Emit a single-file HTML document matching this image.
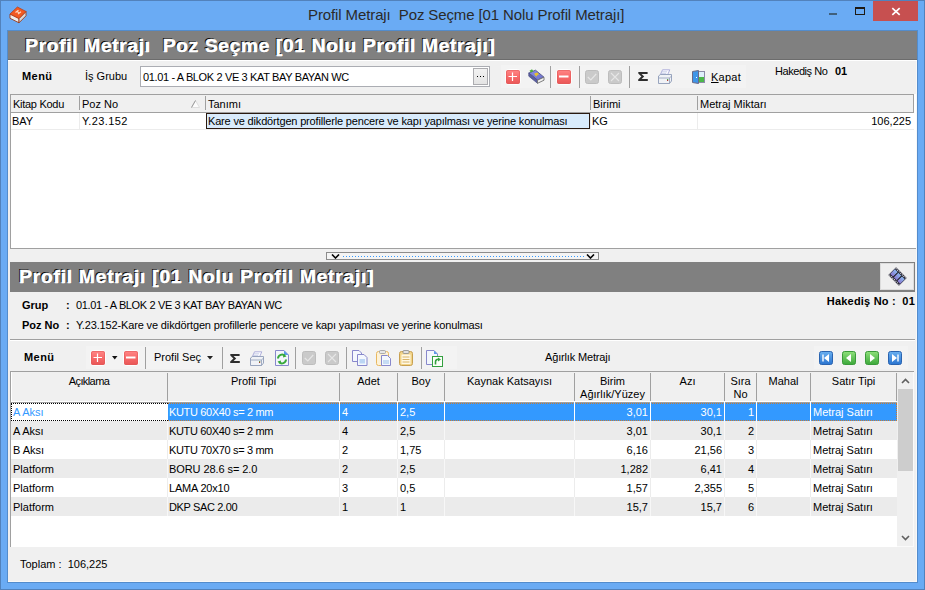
<!DOCTYPE html>
<html><head><meta charset="utf-8">
<style>
*{margin:0;padding:0;box-sizing:border-box}
html,body{width:925px;height:590px;overflow:hidden;background:#6aabf4;font-family:"Liberation Sans",sans-serif;font-size:11px;color:#000}
.a{position:absolute}
.t{position:absolute;white-space:nowrap;line-height:13px;font-size:11px}
.b{font-weight:bold}
.r{text-align:right}
.c{text-align:center}
.sep{position:absolute;width:1px;background:#a0a0a0}
.vl{position:absolute;width:1px}
.hl{position:absolute;height:1px}
</style></head><body>
<!-- window frame -->
<div class="a" style="left:0;top:0;width:925px;height:590px;border:1px solid #5282bc;background:#6aabf4"></div>
<div class="a" style="left:7px;top:30px;width:911px;height:553px;border:1px solid #538ccc"></div>
<!-- title icon -->
<svg class="a" style="left:9px;top:6px" width="18" height="18" viewBox="0 0 18 18"><path d="M1 8 L10 12.5 L10 16.8 L1 12.3 Z" fill="#eeeeee" stroke="#9a3a1a" stroke-width="0.9"/><path d="M10 12.5 L17 5.5 L17 9.8 L10 16.8 Z" fill="#d8d8d8" stroke="#9a3a1a" stroke-width="0.9"/><path d="M8.4 1 L17 5.5 L10 12.5 L1 8 Z" fill="#f25a22" stroke="#b8401a" stroke-width="0.8"/><path d="M6.5 6.5 L9.5 4.2 M9 8 L12 5.7 M7.8 5.6 L10.6 7" stroke="#ffd8c0" stroke-width="1.1"/></svg>
<div class="t" style="left:308px;top:6px;font-size:15px;line-height:18px;letter-spacing:-0.11px;color:#2a2a2a">Profil Metrajı&nbsp; Poz Seçme [01 Nolu Profil Metrajı]</div>
<!-- caption buttons -->
<div class="a" style="left:829px;top:13px;width:8px;height:2px;background:#40607c"></div>
<div class="a" style="left:855px;top:7px;width:10px;height:8px;border:1px solid #1e1a14;border-top-width:2px"></div>
<div class="a" style="left:873px;top:1px;width:45px;height:20px;background:#c75050"></div>
<svg class="a" style="left:891px;top:7px" width="10" height="9" viewBox="0 0 10 9"><path d="M1.3 1.2 L8.7 7.8 M8.7 1.2 L1.3 7.8" stroke="#fff" stroke-width="1.7"/></svg>

<!-- client area -->
<div class="a" style="left:8px;top:31px;width:909px;height:551px;background:#f0f0f0;border-right:1px solid #f8f8f8;border-bottom:1px solid #f8f8f8"></div>

<!-- header 1 -->
<div class="a" style="left:8px;top:31px;width:909px;height:29px;background:#808080;border-bottom:1px solid #6c6c6c"></div>
<div class="a" style="left:8px;top:60px;width:909px;height:1px;background:#fff"></div>
<div class="t b" style="left:25px;top:35px;font-size:19px;line-height:22px;letter-spacing:0.75px;color:#fff;text-shadow:-1px -1px 0 #000,0.5px 0 0 #fff;-webkit-text-stroke:0.3px #fff">Profil Metrajı&nbsp; Poz Seçme [01 Nolu Profil Metrajı]</div>

<!-- toolbar 1 -->
<div class="t b" style="left:22px;top:70px;letter-spacing:0.45px">Menü</div>
<div class="t" style="left:85px;top:70px">İş Grubu</div>
<div class="a" style="left:140px;top:66px;width:350px;height:21px;background:#fff;border:1px solid #abadb3"></div>
<div class="t" style="left:143px;top:71px;letter-spacing:-0.36px">01.01 - A BLOK 2 VE 3 KAT BAY BAYAN WC</div>
<div class="a" style="left:473px;top:68px;width:15px;height:17px;background:linear-gradient(#f2f2f2,#e4e4e4);border:1px solid #acacb0"></div>
<div class="a" style="left:477px;top:76px;width:9px;height:1px;background:repeating-linear-gradient(90deg,#000 0 1px,transparent 1px 3px)"></div>
<div class="a" style="left:501px;top:65px;width:245px;height:23px;background:#f3f3f3"></div>
<!-- red plus -->
<svg class="a" style="left:505px;top:69px" width="16" height="16" viewBox="0 0 16 16"><defs><linearGradient id="rg" x1="0" y1="0" x2="0" y2="1"><stop offset="0" stop-color="#ff8686"/><stop offset="0.5" stop-color="#f86a6a"/><stop offset="1" stop-color="#e85656"/></linearGradient></defs><rect x="0.5" y="0.5" width="15" height="15" rx="3" fill="none" stroke="#fff" stroke-opacity="0.85"/><rect x="1" y="1" width="14" height="14" rx="2" fill="url(#rg)"/><rect x="1.5" y="1.5" width="13" height="13" rx="1.5" fill="none" stroke="#e25a5a" stroke-opacity="0.6"/><path d="M7.5 3.5 V12 M3.5 7.5 H12" stroke="#fff" stroke-width="1.2"/></svg>
<!-- book -->
<svg class="a" style="left:528px;top:69px" width="17" height="15" viewBox="0 0 17 15"><defs><linearGradient id="bk" x1="0" y1="0" x2="1" y2="1"><stop offset="0" stop-color="#8a8ee8"/><stop offset="1" stop-color="#6c70c8"/></linearGradient></defs><path d="M0.8 4 L7.5 1.2 L16 8.2 L9.5 11.2 Z" fill="url(#bk)" stroke="#50548a" stroke-width="0.9"/><path d="M0.8 4 L9.5 11.2 L9.5 14.3 L0.8 7.2 Z" fill="#5a5ea0" stroke="#50548a" stroke-width="0.8"/><path d="M9.5 11.2 L16 8.2 L16 11.2 L9.5 14.3 Z" fill="#f2f2f2" stroke="#707070" stroke-width="0.9"/><path d="M1.5 1.8 L4 0.3 L5.5 2.2 L3 3.5 Z" fill="#4caf3a"/><path d="M7 5 L9 4.2 L10 5.2 L8 6.2 Z M8 6.2 L8.5 7.2" stroke="#f0c820" stroke-width="1.2" fill="none"/></svg>
<div class="sep" style="left:550px;top:66px;height:22px"></div>
<svg class="a" style="left:556px;top:69px" width="16" height="16" viewBox="0 0 16 16"><rect x="0.5" y="0.5" width="15" height="15" rx="3" fill="none" stroke="#fff" stroke-opacity="0.85"/><rect x="1" y="1" width="14" height="14" rx="2" fill="url(#rg)"/><rect x="1.5" y="1.5" width="13" height="13" rx="1.5" fill="none" stroke="#e25a5a" stroke-opacity="0.6"/><path d="M3 7.5 H12.5" stroke="#fff" stroke-width="2"/></svg>
<div class="sep" style="left:579px;top:66px;height:22px"></div>
<svg class="a" style="left:585px;top:70px" width="14" height="14" viewBox="0 0 14 14"><rect x="0.5" y="0.5" width="13" height="13" rx="2" fill="#cacaca" stroke="#bdbdbd"/><path d="M2.8 7 L5.8 10 L11.2 4" stroke="#e6e6e6" stroke-width="1.2" fill="none"/></svg>
<svg class="a" style="left:608px;top:70px" width="14" height="14" viewBox="0 0 14 14"><rect x="0.5" y="0.5" width="13" height="13" rx="2" fill="#cacaca" stroke="#bdbdbd"/><path d="M3 3 L11 11 M11 3 L3 11" stroke="#e6e6e6" stroke-width="1.1"/></svg>
<div class="sep" style="left:629px;top:66px;height:22px"></div>
<svg class="a" style="left:638px;top:72px" width="10" height="9" viewBox="0 0 10 9"><path d="M0.3 0 H9.6 V2 H3.6 L6.2 4.5 L3.6 7 H9.8 V9 H0.2 V7.6 L3.4 4.5 L0.3 1.4 Z" fill="#2e2e2e"/></svg>
<!-- printer -->
<svg class="a" style="left:657px;top:69px" width="17" height="16" viewBox="0 0 17 16"><path d="M5.5 0.8 H12.8 L10.5 6 H3.2 Z" fill="#fafaff" stroke="#a8a8d8" stroke-width="0.9"/><path d="M4.5 2.8 H10 M3.8 4.4 H9.2" stroke="#b8c0e0" stroke-width="0.7"/><path d="M1.5 7 L3.5 5.5 H14.5 L14.5 12 L12.5 14.5 H1.5 Z" fill="#f0f2f6" stroke="#8e9cb8" stroke-width="0.9"/><path d="M1.5 9 H12.5 L14.5 7 M12.5 9 V14.5" stroke="#8e9cb8" stroke-width="0.8" fill="none"/><rect x="10" y="10.5" width="1.2" height="1.5" fill="#b04030"/><rect x="10" y="10" width="1.2" height="0.8" fill="#40a040"/></svg>
<!-- door -->
<svg class="a" style="left:692px;top:70px" width="13" height="14" viewBox="0 0 13 14"><rect x="6.5" y="1.5" width="6" height="11" fill="#dff0fb" stroke="#8b8ba8" stroke-width="1"/><rect x="7" y="7" width="5" height="5" fill="#4cb84a"/><path d="M0.5 1.5 L6.5 0.5 V13.5 L0.5 12.5 Z" fill="#3f95e8" stroke="#6a6a88" stroke-width="1"/><rect x="4" y="7" width="1" height="1" fill="#fff"/></svg>
<div class="t" style="left:711px;top:71px;letter-spacing:0.25px"><u>K</u>apat</div>
<div class="t" style="left:775px;top:65px;letter-spacing:-0.45px">Hakediş No</div>
<div class="t b" style="left:835px;top:65px">01</div>

<!-- upper grid -->
<div class="a" style="left:10px;top:94px;width:906px;height:155px;background:#fff;border-left:1px solid #a0a0a0;border-bottom:1px solid #a0a0a0"></div>
<div class="a" style="left:10px;top:94px;width:904px;height:19px;background:#f0f0f0;border:1px solid #a0a0a0"></div>
<div class="sep" style="left:79px;top:96px;height:14px"></div>
<div class="sep" style="left:205px;top:96px;height:14px"></div>
<div class="sep" style="left:590px;top:96px;height:14px"></div>
<div class="sep" style="left:697px;top:96px;height:14px"></div>
<svg class="a" style="left:191px;top:100px" width="9" height="8" viewBox="0 0 9 8"><path d="M4.5 0.5 L8.5 7.5 H0.5 Z" fill="#fcfcfc" stroke="#d8d8d8" stroke-width="0.8"/><path d="M4.5 0.5 L0.5 7.5" stroke="#909090" stroke-width="0.9"/></svg>
<div class="t" style="left:13px;top:98px;letter-spacing:-0.28px">Kitap Kodu</div>
<div class="t" style="left:82px;top:98px">Poz No</div>
<div class="t" style="left:208px;top:98px">Tanımı</div>
<div class="t" style="left:593px;top:98px">Birimi</div>
<div class="t" style="left:700px;top:98px">Metraj Miktarı</div>
<div class="hl" style="left:11px;top:129px;width:903px;background:#ececec"></div>
<div class="vl" style="left:79px;top:113px;height:16px;background:#ececec"></div>
<div class="vl" style="left:590px;top:113px;height:16px;background:#ececec"></div>
<div class="vl" style="left:697px;top:113px;height:16px;background:#ececec"></div>
<div class="t" style="left:12px;top:115px">BAY</div>
<div class="t" style="left:82px;top:115px;letter-spacing:0.4px">Y.23.152</div>
<div class="a" style="left:206px;top:113px;width:384px;height:16px;background:#d9ebfb;border:1px solid #2a1a10"></div>
<div class="t" style="left:208px;top:115px;letter-spacing:-0.17px">Kare ve dikdörtgen profillerle pencere ve kapı yapılması ve yerine konulması</div>
<div class="t" style="left:592px;top:115px">KG</div>
<div class="t r" style="left:800px;width:111px;top:115px">106,225</div>

<!-- splitter -->
<div class="a" style="left:326px;top:252px;width:273px;height:8px;background:#f4f4f4;border:1px solid #8c8c8c"></div>
<svg class="a" style="left:331px;top:254px" width="9" height="5" viewBox="0 0 9 5"><path d="M1 0.5 L4.5 4 L8 0.5" stroke="#000" stroke-width="1.6" fill="none"/></svg>
<svg class="a" style="left:586px;top:254px" width="9" height="5" viewBox="0 0 9 5"><path d="M1 0.5 L4.5 4 L8 0.5" stroke="#000" stroke-width="1.6" fill="none"/></svg>
<div class="a" style="left:343px;top:256px;width:241px;height:1px;background:repeating-linear-gradient(90deg,#3399ff 0 1px,transparent 1px 3px)"></div>

<!-- header 2 -->
<div class="a" style="left:10px;top:262px;width:905px;height:30px;background:#808080"></div>
<div class="t b" style="left:19px;top:266px;font-size:19px;line-height:22px;letter-spacing:0.85px;color:#fff;text-shadow:-1px -1px 0 #000,0.5px 0 0 #fff;-webkit-text-stroke:0.3px #fff">Profil Metrajı [01 Nolu Profil Metrajı]</div>
<div class="a" style="left:880px;top:263px;width:34px;height:27px;background:#efefef;border:1px solid #dcdcdc"></div>
<svg class="a" style="left:887px;top:266px" width="21" height="21" viewBox="0 0 21 21"><defs><linearGradient id="fm" x1="0" y1="0" x2="0" y2="1"><stop offset="0" stop-color="#8ab8f0"/><stop offset="1" stop-color="#8a78d0"/></linearGradient></defs><g transform="rotate(45 10.5 10.5)"><rect x="3" y="5" width="15" height="11" fill="#2a2a3a"/><rect x="3.5" y="7.3" width="14" height="6.4" fill="url(#fm)"/><path d="M8 7 V14 M13 7 V14" stroke="#111" stroke-width="1"/><path d="M3.5 6 H17.5 M3.5 15 H17.5" stroke="#fff" stroke-width="1" stroke-dasharray="1 1.2"/></g></svg>

<!-- info -->
<div class="t b" style="left:22px;top:299px">Grup</div>
<div class="t b" style="left:66px;top:299px">:</div>
<div class="t" style="left:76px;top:299px;letter-spacing:-0.36px">01.01 - A BLOK 2 VE 3 KAT BAY BAYAN WC</div>
<div class="t b" style="left:22px;top:319px">Poz No</div>
<div class="t b" style="left:66px;top:319px">:</div>
<div class="t" style="left:76px;top:319px;letter-spacing:-0.14px">Y.23.152-Kare ve dikdörtgen profillerle pencere ve kapı yapılması ve yerine konulması</div>
<div class="t b r" style="left:760px;width:155px;top:295px;letter-spacing:0.2px">Hakediş No :&nbsp; 01</div>
<div class="hl" style="left:10px;top:339px;width:905px;background:#a0a0a0"></div>
<div class="hl" style="left:10px;top:340px;width:905px;background:#fff"></div>
<!-- toolbar 2 -->
<div class="a" style="left:86px;top:346px;width:371px;height:23px;background:#f3f3f3"></div>
<div class="a" style="left:814px;top:346px;width:94px;height:23px;background:#f3f3f3"></div>
<div class="t b" style="left:24px;top:351px;letter-spacing:0.45px">Menü</div>
<svg class="a" style="left:90px;top:350px" width="16" height="16" viewBox="0 0 16 16"><rect x="0.5" y="0.5" width="15" height="15" rx="3" fill="none" stroke="#fff" stroke-opacity="0.85"/><rect x="1" y="1" width="14" height="14" rx="2" fill="url(#rg)"/><rect x="1.5" y="1.5" width="13" height="13" rx="1.5" fill="none" stroke="#e25a5a" stroke-opacity="0.6"/><path d="M7.5 3.5 V12 M3.5 7.5 H12" stroke="#fff" stroke-width="1.2"/></svg>
<svg class="a" style="left:112px;top:356px" width="6" height="4" viewBox="0 0 6 4"><path d="M0 0 H5.5 L2.75 3.5 Z" fill="#111"/></svg>
<svg class="a" style="left:123px;top:350px" width="16" height="16" viewBox="0 0 16 16"><rect x="0.5" y="0.5" width="15" height="15" rx="3" fill="none" stroke="#fff" stroke-opacity="0.85"/><rect x="1" y="1" width="14" height="14" rx="2" fill="url(#rg)"/><rect x="1.5" y="1.5" width="13" height="13" rx="1.5" fill="none" stroke="#e25a5a" stroke-opacity="0.6"/><path d="M3 7.5 H12.5" stroke="#fff" stroke-width="2"/></svg>
<div class="sep" style="left:145px;top:347px;height:22px"></div>
<div class="t" style="left:154px;top:351px">Profil Seç</div>
<svg class="a" style="left:207px;top:356px" width="6" height="4" viewBox="0 0 6 4"><path d="M0 0 H6 L3 3.5 Z" fill="#222"/></svg>
<div class="sep" style="left:222px;top:347px;height:22px"></div>
<svg class="a" style="left:230px;top:354px" width="10" height="9" viewBox="0 0 10 9"><path d="M0.3 0 H9.6 V2 H3.6 L6.2 4.5 L3.6 7 H9.8 V9 H0.2 V7.6 L3.4 4.5 L0.3 1.4 Z" fill="#2e2e2e"/></svg>
<svg class="a" style="left:249px;top:351px" width="17" height="16" viewBox="0 0 17 16"><path d="M5.5 0.8 H12.8 L10.5 6 H3.2 Z" fill="#fafaff" stroke="#a8a8d8" stroke-width="0.9"/><path d="M4.5 2.8 H10 M3.8 4.4 H9.2" stroke="#b8c0e0" stroke-width="0.7"/><path d="M1.5 7 L3.5 5.5 H14.5 L14.5 12 L12.5 14.5 H1.5 Z" fill="#f0f2f6" stroke="#8e9cb8" stroke-width="0.9"/><path d="M1.5 9 H12.5 L14.5 7 M12.5 9 V14.5" stroke="#8e9cb8" stroke-width="0.8" fill="none"/><rect x="10" y="10.5" width="1.2" height="1.5" fill="#b04030"/><rect x="10" y="10" width="1.2" height="0.8" fill="#40a040"/></svg>
<svg class="a" style="left:275px;top:350px" width="14" height="16" viewBox="0 0 14 16"><path d="M0.5 0.5 H9 L13.5 5 V15.5 H0.5 Z" fill="#f2f6fc" stroke="#8888cc" stroke-width="1"/><path d="M9 0.5 V5 H13.5 Z" fill="#5a9ae8"/><path d="M3 8.5 A4 4 0 0 1 10 6" stroke="#36a83a" stroke-width="2" fill="none"/><path d="M8.5 4 L11.5 6.5 L8 7.5 Z" fill="#36a83a"/><path d="M11 9.5 A4 4 0 0 1 4 12" stroke="#36a83a" stroke-width="2" fill="none"/><path d="M5.5 14 L2.5 11.5 L6 10.5 Z" fill="#36a83a"/></svg>
<div class="sep" style="left:295px;top:347px;height:22px"></div>
<svg class="a" style="left:302px;top:351px" width="14" height="14" viewBox="0 0 14 14"><rect x="0.5" y="0.5" width="13" height="13" rx="2" fill="#cacaca" stroke="#bdbdbd"/><path d="M2.8 7 L5.8 10 L11.2 4" stroke="#e6e6e6" stroke-width="1.2" fill="none"/></svg>
<svg class="a" style="left:325px;top:351px" width="14" height="14" viewBox="0 0 14 14"><rect x="0.5" y="0.5" width="13" height="13" rx="2" fill="#cacaca" stroke="#bdbdbd"/><path d="M3 3 L11 11 M11 3 L3 11" stroke="#e6e6e6" stroke-width="1.1"/></svg>
<div class="sep" style="left:346px;top:347px;height:22px"></div>
<svg class="a" style="left:352px;top:350px" width="16" height="16" viewBox="0 0 16 16"><path d="M0.5 0.5 H7 L9.5 3 V11.5 H0.5 Z" fill="#f4f8fe" stroke="#8888cc" stroke-width="1"/><path d="M5.5 4.5 H12 L15 7.5 V15.5 H5.5 Z" fill="#f4f8fe" stroke="#8888cc" stroke-width="1"/><path d="M7.5 9 H13 V13.5 H7.5 Z" fill="#bcd6f4"/></svg>
<svg class="a" style="left:376px;top:350px" width="15" height="16" viewBox="0 0 15 16"><rect x="0.5" y="1.5" width="12" height="14" rx="2" fill="#fdf2d8" stroke="#e8b860" stroke-width="1"/><rect x="3.5" y="0.5" width="6" height="3" rx="1" fill="#e6e6e6" stroke="#9a9a9a" stroke-width="0.8"/><path d="M5.5 5.5 H11.5 L14.5 8.5 V15.5 H5.5 Z" fill="#f4f8fe" stroke="#8888cc" stroke-width="1"/><path d="M7 10 H13 V14 H7 Z" fill="#c6dcf4"/></svg>
<svg class="a" style="left:399px;top:350px" width="14" height="16" viewBox="0 0 14 16"><rect x="0.5" y="1.5" width="13" height="14" rx="2" fill="#f2d488" stroke="#c8a050" stroke-width="1"/><rect x="4" y="0.5" width="6" height="3" rx="1" fill="#e0e0e0" stroke="#8a8a8a" stroke-width="0.8"/><rect x="2.5" y="4.5" width="9" height="9.5" fill="#fff8e4"/><path d="M3.5 7 H10.5 M3.5 9.5 H10.5 M3.5 12 H10.5" stroke="#d8b468" stroke-width="1"/></svg>
<div class="sep" style="left:421px;top:347px;height:22px"></div>
<svg class="a" style="left:426px;top:350px" width="17" height="17" viewBox="0 0 17 17"><path d="M0.5 0.5 H8 L11.5 4 V14.5 H0.5 Z" fill="#f2f6fc" stroke="#8888cc" stroke-width="1"/><path d="M8 0.5 V4 H11.5 Z" fill="#5a9ae8"/><rect x="6.5" y="6.5" width="10" height="10" fill="#fafff8" stroke="#34a040" stroke-width="1"/><path d="M9.5 14.5 V12 A2.5 2.5 0 0 1 13 9.5" stroke="#34a040" stroke-width="1.6" fill="none"/><path d="M12 7.5 L15 9.5 L12 11.5 Z" fill="#34a040"/></svg>
<div class="t" style="left:545px;top:351px;letter-spacing:-0.16px">Ağırlık Metrajı</div>
<!-- nav -->
<svg class="a" style="left:819px;top:351px" width="14" height="14" viewBox="0 0 14 14"><defs><linearGradient id="bg1" x1="0" y1="0" x2="0" y2="1"><stop offset="0" stop-color="#6ab0f0"/><stop offset="1" stop-color="#2a74d0"/></linearGradient><linearGradient id="gg1" x1="0" y1="0" x2="0" y2="1"><stop offset="0" stop-color="#8ee07a"/><stop offset="1" stop-color="#3ca83a"/></linearGradient></defs><rect x="0.5" y="0.5" width="13" height="13" rx="2" fill="url(#bg1)" stroke="#2a64b0"/><path d="M4 3.5 V10.5" stroke="#fff" stroke-width="1.4"/><path d="M10 3 V11 L5 7 Z" fill="#fff"/></svg>
<svg class="a" style="left:842px;top:351px" width="14" height="14" viewBox="0 0 14 14"><rect x="0.5" y="0.5" width="13" height="13" rx="2" fill="url(#gg1)" stroke="#3a9a3a"/><path d="M9 3 V11 L4 7 Z" fill="#fff"/></svg>
<svg class="a" style="left:865px;top:351px" width="14" height="14" viewBox="0 0 14 14"><rect x="0.5" y="0.5" width="13" height="13" rx="2" fill="url(#gg1)" stroke="#3a9a3a"/><path d="M5 3 V11 L10 7 Z" fill="#fff"/></svg>
<svg class="a" style="left:888px;top:351px" width="14" height="14" viewBox="0 0 14 14"><rect x="0.5" y="0.5" width="13" height="13" rx="2" fill="url(#bg1)" stroke="#2a64b0"/><path d="M10 3.5 V10.5" stroke="#fff" stroke-width="1.4"/><path d="M4 3 V11 L9 7 Z" fill="#fff"/></svg>

<!-- lower grid -->
<div class="a" style="left:10px;top:371px;width:904px;height:176px;background:#fff;border-left:1px solid #a0a0a0;border-top:1px solid #a0a0a0"></div>
<div class="a" style="left:11px;top:372px;width:886px;height:31px;background:#f0f0f0;border-bottom:1px solid #a0a0a0;box-shadow:inset 1px -1px 0 #fff"></div>
<div class="sep" style="left:167px;top:373px;height:28px"></div>
<div class="sep" style="left:339px;top:373px;height:28px"></div>
<div class="sep" style="left:397px;top:373px;height:28px"></div>
<div class="sep" style="left:444px;top:373px;height:28px"></div>
<div class="sep" style="left:574px;top:373px;height:28px"></div>
<div class="sep" style="left:650px;top:373px;height:28px"></div>
<div class="sep" style="left:724px;top:373px;height:28px"></div>
<div class="sep" style="left:756px;top:373px;height:28px"></div>
<div class="sep" style="left:810px;top:373px;height:28px"></div>
<div class="sep" style="left:896px;top:373px;height:28px"></div>
<div class="t c" style="left:11px;width:156px;top:375px;letter-spacing:-0.6px">Açıklama</div>
<div class="t c" style="left:168px;width:171px;top:375px">Profil Tipi</div>
<div class="t c" style="left:340px;width:57px;top:375px">Adet</div>
<div class="t c" style="left:398px;width:46px;top:375px">Boy</div>
<div class="t c" style="left:445px;width:129px;top:375px">Kaynak Katsayısı</div>
<div class="t c" style="left:575px;width:75px;top:375px">Birim</div>
<div class="t c" style="left:575px;width:75px;top:388px">Ağırlık/Yüzey</div>
<div class="t c" style="left:651px;width:73px;top:375px">Azı</div>
<div class="t c" style="left:725px;width:31px;top:375px">Sıra</div>
<div class="t c" style="left:725px;width:31px;top:388px">No</div>
<div class="t c" style="left:757px;width:53px;top:375px">Mahal</div>
<div class="t c" style="left:811px;width:85px;top:375px">Satır Tipi</div>
<!-- scrollbar -->
<div class="a" style="left:897px;top:372px;width:17px;height:175px;background:#f0f0f0;border-right:1px solid #fafafa;border-bottom:1px solid #fafafa"></div>
<div class="a" style="left:898px;top:389px;width:15px;height:82px;background:#cdcdcd"></div>
<svg class="a" style="left:901px;top:378px" width="9" height="6" viewBox="0 0 9 6"><path d="M1 5 L4.5 1.5 L8 5" stroke="#606060" stroke-width="1.6" fill="none"/></svg>
<svg class="a" style="left:901px;top:535px" width="9" height="6" viewBox="0 0 9 6"><path d="M1 1 L4.5 4.5 L8 1" stroke="#606060" stroke-width="1.6" fill="none"/></svg>
<div class="a" style="left:11px;top:403px;width:157px;height:18px;background:#fff;border:1px dotted #000;border-right:none"></div>
<div class="a" style="left:168px;top:403px;width:729px;height:18px;background:#3399ff;border-top:1px dotted #c87a30;border-bottom:1px dotted #c87a30;border-right:1px dotted #c87a30"></div>
<div class="vl" style="left:339px;top:402px;height:19px;background:#fff"></div>
<div class="vl" style="left:397px;top:402px;height:19px;background:#fff"></div>
<div class="vl" style="left:444px;top:402px;height:19px;background:#fff"></div>
<div class="vl" style="left:574px;top:402px;height:19px;background:#fff"></div>
<div class="vl" style="left:650px;top:402px;height:19px;background:#fff"></div>
<div class="vl" style="left:724px;top:402px;height:19px;background:#fff"></div>
<div class="vl" style="left:756px;top:402px;height:19px;background:#fff"></div>
<div class="vl" style="left:810px;top:402px;height:19px;background:#fff"></div>
<div class="t" style="left:13px;top:406px;color:#3399ff">A Aksı</div>
<div class="t" style="left:169px;top:406px;color:#fff;letter-spacing:-0.35px">KUTU 60X40 s= 2 mm</div>
<div class="t" style="left:342px;top:406px;color:#fff">4</div>
<div class="t" style="left:400px;top:406px;color:#fff">2,5</div>
<div class="t r" style="left:575px;width:73px;top:406px;color:#fff">3,01</div>
<div class="t r" style="left:651px;width:71px;top:406px;color:#fff">30,1</div>
<div class="t r" style="left:725px;width:29px;top:406px;color:#fff">1</div>
<div class="t" style="left:813px;top:406px;color:#fff">Metraj Satırı</div>
<div class="a" style="left:11px;top:421px;width:886px;height:19px;background:#ebebeb"></div>
<div class="vl" style="left:167px;top:421px;height:19px;background:#f7f7f7"></div>
<div class="vl" style="left:339px;top:421px;height:19px;background:#f7f7f7"></div>
<div class="vl" style="left:397px;top:421px;height:19px;background:#f7f7f7"></div>
<div class="vl" style="left:444px;top:421px;height:19px;background:#f7f7f7"></div>
<div class="vl" style="left:574px;top:421px;height:19px;background:#f7f7f7"></div>
<div class="vl" style="left:650px;top:421px;height:19px;background:#f7f7f7"></div>
<div class="vl" style="left:724px;top:421px;height:19px;background:#f7f7f7"></div>
<div class="vl" style="left:756px;top:421px;height:19px;background:#f7f7f7"></div>
<div class="vl" style="left:810px;top:421px;height:19px;background:#f7f7f7"></div>
<div class="t" style="left:13px;top:425px;color:#000">A Aksı</div>
<div class="t" style="left:169px;top:425px;color:#000;letter-spacing:-0.35px">KUTU 60X40 s= 2 mm</div>
<div class="t" style="left:342px;top:425px;color:#000">4</div>
<div class="t" style="left:400px;top:425px;color:#000">2,5</div>
<div class="t r" style="left:575px;width:73px;top:425px;color:#000">3,01</div>
<div class="t r" style="left:651px;width:71px;top:425px;color:#000">30,1</div>
<div class="t r" style="left:725px;width:29px;top:425px;color:#000">2</div>
<div class="t" style="left:813px;top:425px;color:#000">Metraj Satırı</div>
<div class="a" style="left:11px;top:440px;width:886px;height:19px;background:#fff"></div>
<div class="vl" style="left:167px;top:440px;height:19px;background:#ececec"></div>
<div class="vl" style="left:339px;top:440px;height:19px;background:#ececec"></div>
<div class="vl" style="left:397px;top:440px;height:19px;background:#ececec"></div>
<div class="vl" style="left:444px;top:440px;height:19px;background:#ececec"></div>
<div class="vl" style="left:574px;top:440px;height:19px;background:#ececec"></div>
<div class="vl" style="left:650px;top:440px;height:19px;background:#ececec"></div>
<div class="vl" style="left:724px;top:440px;height:19px;background:#ececec"></div>
<div class="vl" style="left:756px;top:440px;height:19px;background:#ececec"></div>
<div class="vl" style="left:810px;top:440px;height:19px;background:#ececec"></div>
<div class="t" style="left:13px;top:444px;color:#000">B Aksı</div>
<div class="t" style="left:169px;top:444px;color:#000;letter-spacing:-0.35px">KUTU 70X70 s= 3 mm</div>
<div class="t" style="left:342px;top:444px;color:#000">2</div>
<div class="t" style="left:400px;top:444px;color:#000">1,75</div>
<div class="t r" style="left:575px;width:73px;top:444px;color:#000">6,16</div>
<div class="t r" style="left:651px;width:71px;top:444px;color:#000">21,56</div>
<div class="t r" style="left:725px;width:29px;top:444px;color:#000">3</div>
<div class="t" style="left:813px;top:444px;color:#000">Metraj Satırı</div>
<div class="a" style="left:11px;top:459px;width:886px;height:19px;background:#ebebeb"></div>
<div class="vl" style="left:167px;top:459px;height:19px;background:#f7f7f7"></div>
<div class="vl" style="left:339px;top:459px;height:19px;background:#f7f7f7"></div>
<div class="vl" style="left:397px;top:459px;height:19px;background:#f7f7f7"></div>
<div class="vl" style="left:444px;top:459px;height:19px;background:#f7f7f7"></div>
<div class="vl" style="left:574px;top:459px;height:19px;background:#f7f7f7"></div>
<div class="vl" style="left:650px;top:459px;height:19px;background:#f7f7f7"></div>
<div class="vl" style="left:724px;top:459px;height:19px;background:#f7f7f7"></div>
<div class="vl" style="left:756px;top:459px;height:19px;background:#f7f7f7"></div>
<div class="vl" style="left:810px;top:459px;height:19px;background:#f7f7f7"></div>
<div class="t" style="left:13px;top:463px;color:#000">Platform</div>
<div class="t" style="left:169px;top:463px;color:#000;letter-spacing:-0.08px">BORU 28.6 s= 2.0</div>
<div class="t" style="left:342px;top:463px;color:#000">2</div>
<div class="t" style="left:400px;top:463px;color:#000">2,5</div>
<div class="t r" style="left:575px;width:73px;top:463px;color:#000">1,282</div>
<div class="t r" style="left:651px;width:71px;top:463px;color:#000">6,41</div>
<div class="t r" style="left:725px;width:29px;top:463px;color:#000">4</div>
<div class="t" style="left:813px;top:463px;color:#000">Metraj Satırı</div>
<div class="a" style="left:11px;top:478px;width:886px;height:19px;background:#fff"></div>
<div class="vl" style="left:167px;top:478px;height:19px;background:#ececec"></div>
<div class="vl" style="left:339px;top:478px;height:19px;background:#ececec"></div>
<div class="vl" style="left:397px;top:478px;height:19px;background:#ececec"></div>
<div class="vl" style="left:444px;top:478px;height:19px;background:#ececec"></div>
<div class="vl" style="left:574px;top:478px;height:19px;background:#ececec"></div>
<div class="vl" style="left:650px;top:478px;height:19px;background:#ececec"></div>
<div class="vl" style="left:724px;top:478px;height:19px;background:#ececec"></div>
<div class="vl" style="left:756px;top:478px;height:19px;background:#ececec"></div>
<div class="vl" style="left:810px;top:478px;height:19px;background:#ececec"></div>
<div class="t" style="left:13px;top:482px;color:#000">Platform</div>
<div class="t" style="left:169px;top:482px;color:#000;letter-spacing:-0.2px">LAMA 20x10</div>
<div class="t" style="left:342px;top:482px;color:#000">3</div>
<div class="t" style="left:400px;top:482px;color:#000">0,5</div>
<div class="t r" style="left:575px;width:73px;top:482px;color:#000">1,57</div>
<div class="t r" style="left:651px;width:71px;top:482px;color:#000">2,355</div>
<div class="t r" style="left:725px;width:29px;top:482px;color:#000">5</div>
<div class="t" style="left:813px;top:482px;color:#000">Metraj Satırı</div>
<div class="a" style="left:11px;top:497px;width:886px;height:19px;background:#ebebeb"></div>
<div class="vl" style="left:167px;top:497px;height:19px;background:#f7f7f7"></div>
<div class="vl" style="left:339px;top:497px;height:19px;background:#f7f7f7"></div>
<div class="vl" style="left:397px;top:497px;height:19px;background:#f7f7f7"></div>
<div class="vl" style="left:444px;top:497px;height:19px;background:#f7f7f7"></div>
<div class="vl" style="left:574px;top:497px;height:19px;background:#f7f7f7"></div>
<div class="vl" style="left:650px;top:497px;height:19px;background:#f7f7f7"></div>
<div class="vl" style="left:724px;top:497px;height:19px;background:#f7f7f7"></div>
<div class="vl" style="left:756px;top:497px;height:19px;background:#f7f7f7"></div>
<div class="vl" style="left:810px;top:497px;height:19px;background:#f7f7f7"></div>
<div class="t" style="left:13px;top:501px;color:#000">Platform</div>
<div class="t" style="left:169px;top:501px;color:#000;letter-spacing:-0.35px">DKP SAC 2.00</div>
<div class="t" style="left:342px;top:501px;color:#000">1</div>
<div class="t" style="left:400px;top:501px;color:#000">1</div>
<div class="t r" style="left:575px;width:73px;top:501px;color:#000">15,7</div>
<div class="t r" style="left:651px;width:71px;top:501px;color:#000">15,7</div>
<div class="t r" style="left:725px;width:29px;top:501px;color:#000">6</div>
<div class="t" style="left:813px;top:501px;color:#000">Metraj Satırı</div>
<div class="t" style="left:20px;top:558px">Toplam :&nbsp; 106,225</div>

</body></html>
